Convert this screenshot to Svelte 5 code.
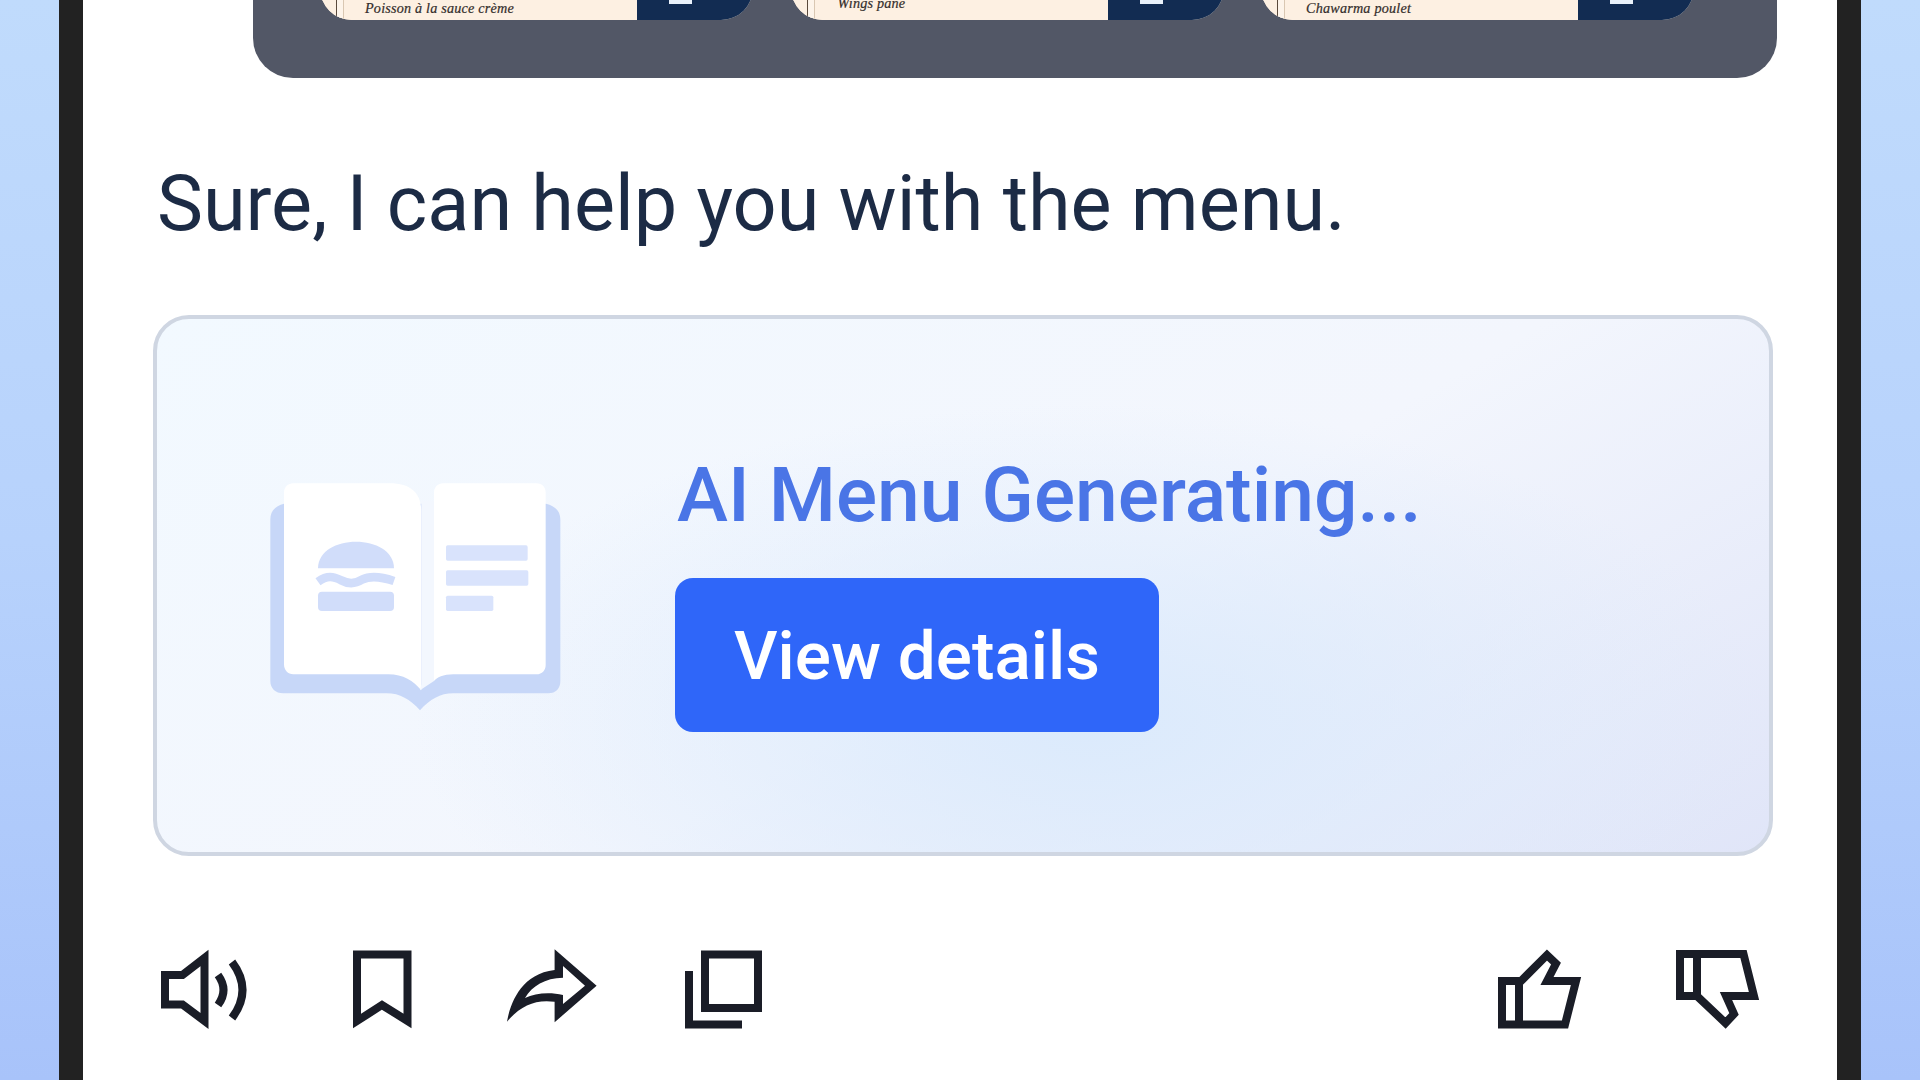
<script>
  const cards = [
    { name: 'Poisson à la sauce crème', cls: 'c1' },
    { name: 'Wings pané', cls: 'c2' },
    { name: 'Chawarma poulet', cls: 'c3' }
  ];
</script>

<div class="stage">
  <div class="phone">
    <div class="screen">
      <div class="panel">
        {#each cards as c}
          <div class="menu-card {c.cls}">
            <div class="cream"><span class="rule"></span><span class="dish">{c.name}</span></div>
            <div class="navy"><span class="plus"></span></div>
          </div>
        {/each}
      </div>

      <p class="intro">Sure, I can help you with the menu.</p>

      <div class="gen">
        <svg class="book" viewBox="0 0 1080 840" aria-hidden="true">
          <path fill="#c7d7f8" d="M132 158C106 165 91 180 91 205V690C91 712 106 727 130 727H440C480 727 510 745 540 778C570 745 600 727 640 727H925C948 727 961 712 961 690V205C961 180 945 165 918 158Z" />
          <path fill="#ffffff" d="M132 125C132 108 144 97 160 97H450C510 97 544 125 544 180V718C520 690 490 670 445 670H160C144 670 132 658 132 640Z" />
          <path fill="#ffffff" d="M582 125C582 108 594 97 610 97H890C906 97 917 108 917 125V642C917 658 906 670 890 670H640C610 670 590 680 582 690Z" />
          <path fill="#f3f7fe" d="M544 150H582V690L540 718L544 700Z" />
          <path fill="#d1ddfa" d="M234 352C234 300 290 272 348 272C406 272 462 300 462 352Z" />
          <path fill="none" stroke="#d1ddfa" stroke-width="26" d="M234 392C262 372 280 376 304 388C326 400 344 400 366 386C390 374 420 376 462 390" />
          <rect fill="#d1ddfa" x="234" y="422" width="228" height="58" rx="12" />
          <rect fill="#d9e3fc" x="618" y="283" width="245" height="46" rx="5" />
          <rect fill="#d9e3fc" x="618" y="358" width="247" height="46" rx="5" />
          <rect fill="#d9e3fc" x="618" y="434" width="142" height="46" rx="5" />
        </svg>
        <div class="gen-body">
          <div class="gen-title">AI Menu Generating...</div>
          <button class="view">View details</button>
        </div>
      </div>

      <div class="actions">
        <div class="group">
          <svg class="ico speaker" viewBox="162 948 86 82" aria-label="Read aloud">
            <path d="M166 975H183.5L205.5 958V1021L183.5 1004.5H166Z" />
            <path d="M219 975Q230 990 219 1005" />
            <path d="M233 962Q254 990 233 1018" />
          </svg>
          <svg class="ico bookmark" viewBox="352 948 60 82" aria-label="Save">
            <path d="M357 954.5H407.5V1021L382 1005L357 1021Z" />
          </svg>
          <svg class="ico share" viewBox="506 948 92 82" aria-label="Share">
            <path class="solid" fill-rule="evenodd" d="M554.6 949.3L596.6 985.7L554.6 1022.3V1001.7C535 999 520 1006 507 1021.7C510 1005 520 974 554.6 970ZM563 966V977.7C545 978 532 986 525 998C535 993 550 992 563 995V1004L585 985.7Z" />
          </svg>
          <svg class="ico copy" viewBox="684 948 80 82" aria-label="Copy">
            <rect x="705" y="954.5" width="53" height="53.5" />
            <path d="M689 971V1024.5H742" />
          </svg>
        </div>
        <div class="group right">
          <svg class="ico up" viewBox="1497 948 85 82" aria-label="Like">
            <path d="M1502 1024.5V981H1521L1547 955L1556 963.5L1547 981H1576L1565 1024.5Z" />
            <path d="M1519 981V1024.5" />
          </svg>
          <svg class="ico down" viewBox="1675 948 85 82" aria-label="Dislike">
            <path d="M1680 954H1743.5L1754 996H1726L1734 1014L1725.5 1023L1697 996H1680Z" />
            <path d="M1697 954V996" />
          </svg>
        </div>
      </div>
    </div>
  </div>
</div>

<style>
  :global(body) { margin: 0; overflow: hidden; }
  .stage {
    width: 1920px; height: 1080px; overflow: hidden;
    background: linear-gradient(180deg, #c0dbfc 0%, #b7d2fc 50%, #a8c3fa 100%);
    display: flex; justify-content: center; align-items: stretch;
  }
  .phone { width: 1802px; height: 1080px; box-sizing: border-box; border-left: 24px solid #222; border-right: 24px solid #222; background: #fff; }
  .screen { height: 1080px; font-family: Roboto, "Noto Sans", sans-serif; }
  .panel {
    margin-left: 170px; width: 1524px; height: 78px; box-sizing: border-box; background: #525766;
    border-radius: 0 0 40px 40px; display: flex; gap: 37.5px; padding: 0 0 0 67px; align-items: flex-start; overflow: hidden;
  }
  .menu-card { width: 433px; height: 50px; margin-top: -30px; flex: none; display: flex; border-radius: 0 0 32px 32px; overflow: hidden; background: #fdf0e0; }
  .cream { flex: 1; background: #fdf0e2; position: relative; }
  .rule { position: absolute; left: 16px; top: 0; bottom: 0; width: 6px; border-left: 1.5px solid #5b4a3c; border-right: 1px solid #d9c7b2; background: #fdf4ea; }
  .dish { position: absolute; left: 45px; bottom: 4px; font: italic 14.2px/16px "Liberation Serif", serif; letter-spacing: .2px; color: #332d2b; white-space: nowrap; -webkit-text-stroke: .2px #332d2b; }
  .c2 .dish { bottom: 9px; left: 47px; }
  .navy { width: 116px; background: #122c52; position: relative; }
  .plus { position: absolute; left: 32px; top: 0; width: 23px; height: 34px; background: #eaf2fb; }
  .intro { margin: 0; padding: 76px 0 0 74px; height: 237px; box-sizing: border-box; font-size: 77.4px; line-height: 100px; color: #1c2b45; }
  .gen {
    margin-left: 70px; width: 1620px; height: 541px; box-sizing: border-box; border: 4.5px solid #cfd6e2; border-radius: 36px;
    background:
      radial-gradient(ellipse 42% 60% at 58% 76%, #dbeafc 0%, rgba(219,234,252,0) 100%),
      linear-gradient(150deg, #f2f9ff 0%, #f3f6fd 55%, #e0e5f8 100%);
    display: flex; align-items: center;
  }
  .book { width: 360px; height: 280px; margin-left: 83px; margin-top: 10px; flex: none; }
  .gen-body { margin-left: 75px; display: flex; flex-direction: column; align-items: flex-start; gap: 37px; margin-top: 10px; }
  .gen-title { font-size: 76.8px; line-height: 92px; font-weight: 500; color: #4a75e6; margin-left: 2px; white-space: nowrap; }
  .view { width: 484px; height: 154px; border: 0; border-radius: 18px; background: #2f66f9; color: #fff; font: 500 67.5px Roboto, sans-serif; padding: 0; }
  .actions { display: flex; justify-content: space-between; padding: 92px 0 0 78px; width: 1677px; box-sizing: border-box; }
  .group { display: flex; align-items: flex-start; }
  .ico { height: 82px; display: block; fill: none; stroke: #1a1d27; stroke-width: 8; stroke-linejoin: miter; stroke-miterlimit: 8; }
  .solid { fill: #1a1d27; stroke: none; }
  .speaker { width: 86px; margin-right: 105px; }
  .bookmark { width: 60px; margin-right: 94px; }
  .share { width: 92px; margin-right: 86px; }
  .copy { width: 80px; }
  .up { width: 85px; margin-right: 93px; }
  .down { width: 85px; }
</style>
